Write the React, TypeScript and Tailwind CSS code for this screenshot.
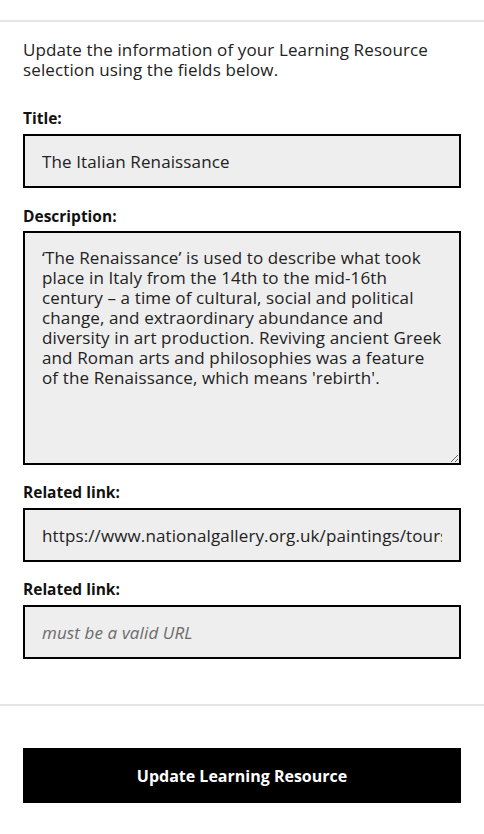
import React from "react";

export default function App() {
  const font = { fontFamily: "'Open Sans', 'Noto Sans', sans-serif" };
  return (
    <div className="w-[484px] h-[834px] bg-white text-[#111]" style={font}>
      <div className="h-5" />
      <div className="border-t-2 border-[#e6e6e6]" />
      <div className="px-[23px]">
        <p className="mt-[18px] text-[17px] leading-[20px] tracking-[0.12px] text-[#222]">
          Update the information of your Learning Resource selection using the fields below.
        </p>

        <label className="block mt-[28px] mb-[6px] text-[15.5px] leading-[20px] font-bold">Title:</label>
        <input
          readOnly
          defaultValue="The Italian Renaissance"
          className="block w-full h-[54px] border-2 border-black bg-[#eeeeee] px-[17px] text-[17px] tracking-[0.12px] text-[#222] outline-none"
          style={font}
        />

        <label className="block mt-[18px] mb-[5px] text-[15.5px] leading-[20px] font-bold">Description:</label>
        <textarea
          readOnly
          defaultValue={"‘The Renaissance’ is used to describe what took place in Italy from the 14th to the mid-16th century – a time of cultural, social and political change, and extraordinary abundance and diversity in art production. Reviving ancient Greek and Roman arts and philosophies was a feature of the Renaissance, which means 'rebirth'."}
          className="block w-full h-[234px] border-2 border-black bg-[#eeeeee] px-[17px] pt-[15px] text-[17px] leading-[20px] tracking-[0.12px] text-[#222] outline-none"
          style={font}
        />

        <label className="block mt-[17px] mb-[6px] text-[15.5px] leading-[20px] font-bold">Related link:</label>
        <input
          readOnly
          defaultValue="https://www.nationalgallery.org.uk/paintings/tours/the-italian-renaissance"
          className="block w-full h-[54px] border-2 border-black bg-[#eeeeee] px-[17px] text-[17px] tracking-[0.12px] text-[#222] outline-none"
          style={font}
        />

        <label className="block mt-[17px] mb-[6px] text-[15.5px] leading-[20px] font-bold">Related link:</label>
        <input
          readOnly
          placeholder="must be a valid URL"
          className="block w-full h-[54px] border-2 border-black bg-[#eeeeee] px-[17px] text-[17px] tracking-[0.12px] text-[#222] outline-none placeholder:italic placeholder:text-[#6b6b6b]"
          style={font}
        />
      </div>

      <div className="mt-[45px] border-t-2 border-[#e6e6e6]" />

      <div className="px-[23px] mt-[42px]">
        <button className="w-full h-[55px] bg-black text-white text-[16px] font-bold" style={font}>
          Update Learning Resource
        </button>
      </div>
    </div>
  );
}
